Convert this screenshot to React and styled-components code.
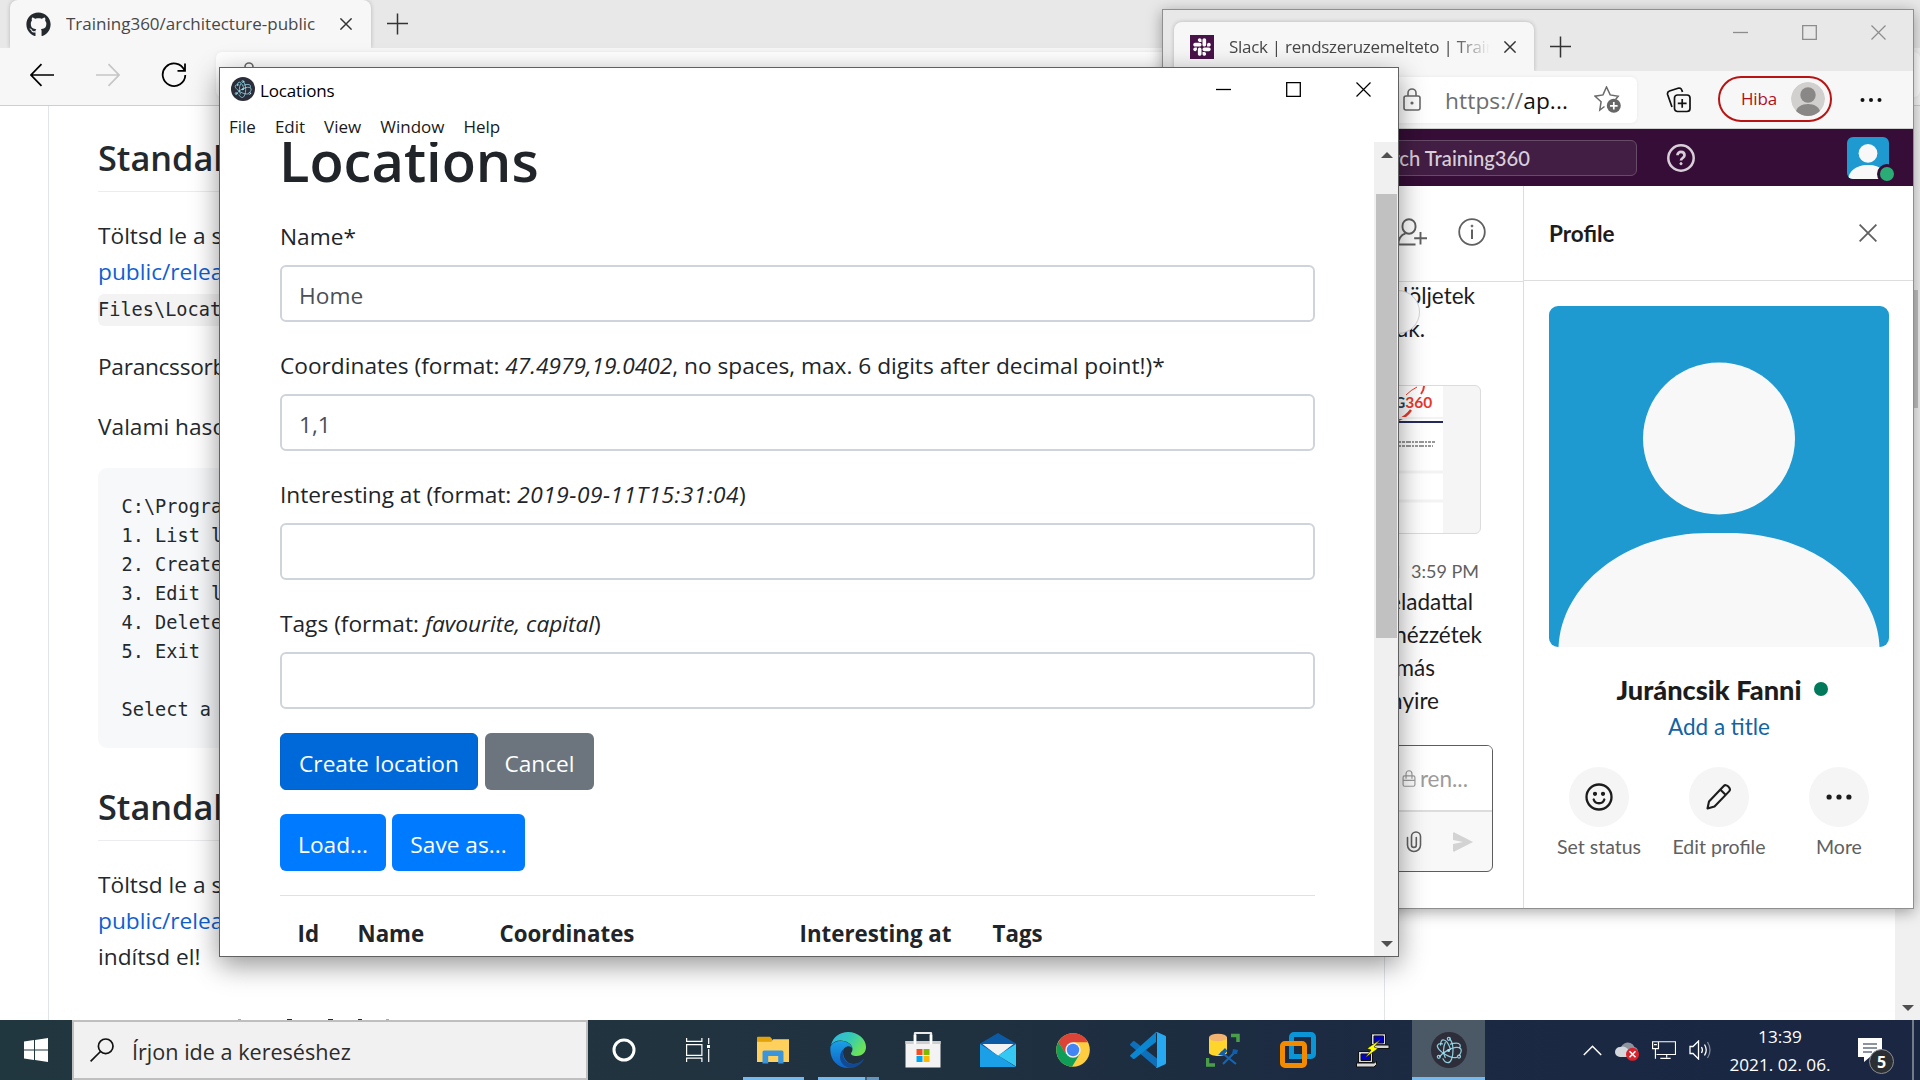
import React from "react";
import styled, { createGlobalStyle, css } from "styled-components";
import { FaGithub, FaSlack } from "react-icons/fa";

const ui = `"Open Sans", "Noto Sans", sans-serif`;
const lato = `Lato, "Noto Sans", sans-serif`;
const mono = `"DejaVu Sans Mono", monospace`;

const Global = createGlobalStyle`
  * { box-sizing: border-box; }
  body { margin: 0; overflow: hidden; font-family: ${ui}; }
  svg { display: block; flex: none; }
  h1, h2, p, pre { margin: 0; }
`;

const Desktop = styled.div`
  position: relative;
  width: 1920px;
  height: 1080px;
  display: grid;
  grid-template-rows: 1020px 60px;
  overflow: hidden;
  background: #fff;
`;

const Row = styled.div`
  display: flex;
  align-items: center;
  gap: ${(p) => p.$gap || 0}px;
`;
const Spacer = styled.span`
  flex: none;
  width: ${(p) => p.$w}px;
`;

/* ---------- browser chrome ---------- */
const Browser = styled.section`
  display: grid;
  grid-template-rows: 48px 58px 1fr;
  min-height: 0;
  background: #fff;
`;
const TabStrip = styled.header`
  display: flex;
  align-items: flex-end;
  background: #e8e8e8;
  padding-left: ${(p) => p.$left}px;
`;
const Tab = styled.div`
  display: flex;
  align-items: center;
  width: ${(p) => p.$w}px;
  height: ${(p) => p.$h}px;
  padding: 0 ${(p) => p.$pr}px 0 16px;
  background: #f7f7f7;
  border-radius: 8px 8px 0 0;
  box-shadow: 0 0 4px rgba(0, 0, 0, 0.22);
  clip-path: inset(-5px -5px 0 -5px);
`;
const TabTitle = styled.span`
  flex: 1;
  margin-left: ${(p) => p.$ml}px;
  font-size: 17px;
  letter-spacing: ${(p) => p.$ls || 0}px;
  line-height: 24px;
  color: #474747;
  white-space: nowrap;
  overflow: hidden;
  ${(p) => p.$fade && css`
    margin-right: 14px;
    mask-image: linear-gradient(90deg, #000 86%, transparent 100%);
  `}
`;
const NewTab = styled.div`
  display: flex;
  align-items: center;
  height: ${(p) => p.$h}px;
  padding-left: 16px;
`;
const ToolBar = styled.div`
  display: flex;
  align-items: center;
  background: #f7f7f7;
  border-bottom: 1px solid #cfcfcf;
`;
const NavButtons = styled.div`
  display: flex;
  align-items: center;
  gap: 41.5px;
  width: 216px;
  padding: 0 0 4px 30px;
`;
const AddressField = styled.div`
  flex: 1;
  height: 45px;
  margin-bottom: 4px;
  padding: 10px 24px;
  border-radius: 6px;
  background: #fff;
  box-shadow: 0 0 4px rgba(0, 0, 0, 0.06);
`;

/* ---------- GitHub page ---------- */
const PageRow = styled.div`
  display: grid;
  grid-template-columns: 48px 1337px 1fr 25px;
  min-height: 0;
`;
const Readme = styled.article`
  overflow: hidden;
  border: 1px solid #e1e4e8;
  border-width: 0 1px;
  padding: 28px 48px 0 49px;
  color: #24292e;
`;
const ReadmeTitle = styled.h2`
  height: 58px;
  padding-top: 1px;
  border-bottom: 1px solid #eaecef;
  font-size: 34.3px;
  font-weight: 600;
  line-height: 45px;
  margin-bottom: 25px;
`;
const Para = styled.p`
  font-size: 22.7px;
  letter-spacing: ${(p) => p.$ls || 0}px;
  line-height: 36px;
  padding-top: 1px;
  margin-bottom: ${(p) => p.$mb ?? 23}px;
  white-space: nowrap;
`;
const Link = styled.span`
  color: #0f5fd0;
`;
const InlineCode = styled.code`
  display: inline-block;
  height: 32px;
  padding-right: 8px;
  background: #f3f3f3;
  border-radius: 6px;
  font: 18.6px/32px ${mono};
`;
const CodeBlock = styled.pre`
  height: 280px;
  margin-bottom: 35px;
  padding: 24px 23.5px;
  border-radius: 9px;
  background: #f6f8fa;
  font: 18.6px/29px ${mono};
`;
const HiddenHeading = styled.div`
  display: flex;
  padding: 44px 0 0 140px;
`;
const Ascender = styled.i`
  width: ${(p) => p.$w}px;
  height: 1px;
  margin-right: ${(p) => p.$mr}px;
  background: ${(p) => (p.$soft ? "#a9a9a9" : "#24292e")};
`;
const PageScroll = styled.div`
  grid-column: 4;
  display: flex;
  flex-direction: column;
  justify-content: space-between;
  align-items: center;
  padding: 184px 2px 9px;
  background: #f0f0f0;
`;
const Thumb = styled.div`
  width: 21px;
  height: ${(p) => p.$h}px;
  background: #c1c1c1;
`;

/* ---------- floating windows ---------- */
const FloatWindow = styled.section`
  position: absolute;
  left: ${(p) => p.$x}px;
  top: ${(p) => p.$y}px;
  width: ${(p) => p.$w}px;
  height: ${(p) => p.$h}px;
  display: grid;
  grid-template-columns: 100%;
  background: #fff;
  overflow: hidden;
`;
const SlackWindow = styled(FloatWindow)`
  grid-template-rows: 61px 58px 57px 1fr;
  border: 1px solid #8f8f8f;
  box-shadow: 0 3px 14px rgba(0, 0, 0, 0.35);
`;
const LocationsWindow = styled(FloatWindow)`
  grid-template-rows: 44px 30px 1fr;
  border: 1px solid #616161;
  box-shadow: 0 8px 26px rgba(0, 0, 0, 0.42);
`;

const StripControls = styled.div`
  display: flex;
  gap: 54px;
  margin-left: auto;
  padding: 0 27px 31px 0;
`;
const SlackToolbar = styled(ToolBar)`
  padding-left: 214px;
`;
const SlackAddress = styled.div`
  display: flex;
  align-items: center;
  width: 260px;
  height: 46px;
  padding: 0 16px 0 26px;
  border-radius: 6px;
  background: #fff;
  box-shadow: 0 0 4px rgba(0, 0, 0, 0.06);
`;
const Url = styled.span`
  flex: 1;
  margin-left: 24px;
  padding-top: 2px;
  font-size: 22.7px;
  letter-spacing: 0.1px;
  color: #6e6e6e;
  white-space: nowrap;
  b { font-weight: 400; color: #111; }
`;
const ProfilePill = styled.div`
  display: flex;
  align-items: center;
  justify-content: space-between;
  width: 114px;
  height: 46px;
  margin: 0 28px 2px 26px;
  padding: 0 5px 0 21px;
  border: 2px solid #b81414;
  border-radius: 23px;
  color: #b10e1c;
  font-size: 17px;
  letter-spacing: -0.2px;
`;

const SlackTop = styled.div`
  display: flex;
  align-items: center;
  background: #350d36;
`;
const SlackSearch = styled.div`
  width: 474px;
  height: 36px;
  padding-right: 106px;
  border: 1px solid #684a69;
  border-radius: 6px;
  background: #431e44;
  color: #d9cfd9;
  font: 500 20.2px/34px ${lato};
  text-align: right;
`;
const TopAvatar = styled.div`
  position: relative;
  margin: 1px 0 0 152px;
`;
const Presence = styled.span`
  position: absolute;
  right: -8px;
  bottom: -5px;
  width: 20px;
  height: 20px;
  border: 3px solid #350d36;
  border-radius: 50%;
  background: #2bac76;
`;
const SlackBody = styled.div`
  display: grid;
  grid-template-columns: 361px 1fr;
  min-height: 0;
  font-family: ${lato};
`;
const Channel = styled.div`
  display: flex;
  flex-direction: column;
  min-width: 0;
  border-right: 1px solid #dddddd;
`;
const ChannelHead = styled.div`
  display: flex;
  align-items: center;
  justify-content: flex-end;
  gap: 31px;
  height: 96px;
  padding: 0 37px 3px 0;
  border-bottom: 1px solid #dddddd;
`;
const MsgLine = styled.div`
  height: 33px;
  padding-right: ${(p) => p.$end}px;
  text-align: right;
  font-size: 22.5px;
  line-height: 33px;
  color: #1d1c1d;
  white-space: nowrap;
`;
const Quoted = styled.div`
  position: relative;
  margin-top: -3px;
`;
const RoundButton = styled.span`
  position: absolute;
  left: 213px;
  top: 11px;
  width: 44px;
  height: 44px;
  border: 1px solid #d5d5d5;
  border-radius: 50%;
  background: #fff;
`;
const FileCard = styled.div`
  align-self: flex-end;
  width: 180px;
  height: 149px;
  margin: 40px 42px 23px 0;
  padding-left: 1px;
  border: 1.5px solid #dcdcdc;
  border-radius: 6px;
  background: #f5f5f5;
  overflow: hidden;
`;
const Stamp = styled(MsgLine)`
  height: 28px;
  line-height: 25px;
  font-size: 18px;
  color: #616061;
  b { margin-right: 11px; font-size: 22.5px; font-weight: 900; color: #1d2a63; }
`;
const Composer = styled.div`
  align-self: flex-end;
  display: grid;
  grid-template-rows: 66px 1fr;
  width: 180px;
  height: 127px;
  margin: 28px 30px 0 0;
  border: 1px solid #5e5d5e;
  border-radius: 6px;
  background: #f8f8f8;
  overflow: hidden;
`;
const ComposerInput = styled.div`
  display: flex;
  align-items: center;
  justify-content: flex-end;
  gap: 4px;
  padding-right: 24px;
  border-bottom: 2px solid #dddddd;
  background: #fff;
  color: #9c9c9c;
  font-size: 22.5px;
`;
const ComposerTools = styled.div`
  display: flex;
  align-items: center;
  justify-content: flex-end;
  gap: 31px;
  padding-right: 19px;
`;

const Profile = styled.aside`
  display: flex;
  flex-direction: column;
`;
const ProfileHead = styled.div`
  display: flex;
  align-items: center;
  justify-content: space-between;
  height: 95px;
  padding: 0 36px 0 25px;
  border-bottom: 1px solid #dddddd;
  color: #1d1c1d;
  font-size: 22.5px;
  font-weight: 700;
`;
const ProfileContent = styled.div`
  display: flex;
  flex-direction: column;
  align-items: center;
  padding: 25px 24px 0 25px;
`;
const PersonName = styled.div`
  display: flex;
  align-items: center;
  gap: 12px;
  height: 40px;
  margin: 22px 0 1px 6px;
  font-size: 27.2px;
  font-weight: 900;
  color: #1d1c1d;
`;
const OnlineDot = styled.span`
  width: 14px;
  height: 14px;
  border-radius: 50%;
  background: #007a5a;
`;
const AddTitle = styled.div`
  height: 33px;
  line-height: 33px;
  font-size: 22.5px;
  color: #1264a3;
`;
const Actions = styled.div`
  display: grid;
  grid-template-columns: repeat(3, 120px);
  margin: 24px -10px 0;
`;
const Action = styled.div`
  display: flex;
  flex-direction: column;
  align-items: center;
  gap: 7px;
  font-size: 19.5px;
  line-height: 26px;
  color: #616061;
`;
const ActionDisc = styled.span`
  display: grid;
  place-items: center;
  width: 60px;
  height: 60px;
  border-radius: 50%;
  background: #f5f5f5;
`;

/* ---------- Locations app ---------- */
const TitleBar = styled.header`
  display: flex;
  align-items: center;
  padding: 0 27px 2px 11px;
  color: #000;
`;
const WindowTitle = styled.span`
  flex: 1;
  margin-left: 5px;
  padding-top: 2px;
  font-size: 17px;
  letter-spacing: -0.15px;
`;
const MenuBar = styled.nav`
  display: flex;
  gap: 19px;
  padding-left: 9px;
  font-size: 17px;
  line-height: 29px;
  color: #1a1a1a;
`;
const AppBody = styled.div`
  display: grid;
  grid-template-columns: 1fr 24px;
  min-height: 0;
`;
const Content = styled.main`
  overflow: hidden;
  min-height: 0;
  padding: 0 59px 0 60px;
  color: #212529;
`;
const Title = styled.h1`
  margin: -19px 0 21px -1px;
  font-size: 56px;
  font-weight: 600;
  line-height: 74px;
  height: 73px;
`;
const Field = styled.label`
  display: block;
  height: 129px;
  font-size: 22.7px;
  line-height: 40px;
`;
const Example = styled.em`
  letter-spacing: ${(p) => p.$ls || 0}px;
`;
const Input = styled.input`
  display: block;
  width: 100%;
  height: 57px;
  margin-top: 8px;
  padding: 4px 17px 0;
  border: 2px solid #ced4da;
  border-radius: 6px;
  background: #fff;
  color: #495057;
  font: 22.7px/36px ${ui};
`;
const ButtonRow = styled.div`
  display: flex;
  gap: ${(p) => p.$gap}px;
  margin-bottom: 24px;
`;
const Button = styled.button`
  width: ${(p) => p.$w}px;
  height: 57px;
  padding: 5px 0 0;
  border: ${(p) => (p.$tone === "active" ? "1.5px solid #0062cc" : "0")};
  border-radius: 6px;
  background: ${(p) => ({ active: "#0069d9", muted: "#6c757d", main: "#007bff" }[p.$tone])};
  color: #fff;
  font: 22.7px/36px ${ui};
  white-space: nowrap;
`;
const TableHead = styled.div`
  display: grid;
  grid-template-columns: 60px 142px 300px 193px 1fr;
  padding: 19px 0 0 17.5px;
  border-top: 1px solid #dee2e6;
  font-size: 22.3px;
  font-weight: 700;
  line-height: 38px;
`;
const AppScroll = styled.div`
  display: flex;
  flex-direction: column;
  align-items: center;
  padding: 10px 0 9px 1px;
  background: #f0f0f0;
`;
const ScrollGap = styled.div`
  flex: ${(p) => (p.$h ? "none" : 1)};
  height: ${(p) => p.$h || 0}px;
`;

/* ---------- taskbar ---------- */
const TaskBar = styled.footer`
  display: flex;
  background: linear-gradient(90deg, #21373f 0%, #20323f 45%, #1b2942 75%, #1a2642 100%);
`;
const StartButton = styled.div`
  display: grid;
  place-items: center;
  width: 72px;
`;
const SearchBox = styled.div`
  display: flex;
  align-items: center;
  gap: 18px;
  width: 516px;
  padding-left: 16px;
  border: 2px solid #bfbfbf;
  background: #f1f1f1;
`;
const SearchHint = styled.span`
  padding-top: 2px;
  color: #2b2b2b;
  font-size: 21.6px;
`;
const TaskItem = styled.div`
  display: grid;
  place-items: center;
  width: ${(p) => p.$w || 75}px;
  position: relative;
  background: ${(p) => (p.$active ? "#4b5866" : "transparent")};
`;
const Underline = styled.span`
  position: absolute;
  left: ${(p) => p.$left}px;
  bottom: 0;
  width: ${(p) => p.$w}px;
  height: 3px;
  background: ${(p) => p.$bg || "#76b9ed"};
`;
const Tray = styled.div`
  display: flex;
  align-items: center;
  gap: 13px;
  margin-left: auto;
`;
const Clock = styled.div`
  width: 104px;
  margin-left: 3px;
  text-align: center;
  color: #fff;
  font-size: 17.2px;
  line-height: 28.5px;
  white-space: nowrap;
  padding-top: 2px;
`;
const Notice = styled.div`
  position: relative;
  width: 36px;
  height: 36px;
  margin: 12px 0 0 13px;
`;
const NoticeCount = styled.span`
  position: absolute;
  right: 0;
  bottom: 0;
  display: grid;
  place-items: center;
  width: 25px;
  height: 25px;
  border: 1.5px solid #8b8f94;
  border-radius: 50%;
  background: #2b2f33;
  color: #fff;
  font-size: 16px;
  font-weight: 700;
  line-height: 1;
`;
const ShowDesktop = styled.div`
  width: 8px;
  height: 60px;
  margin-left: 5px;
  border-left: 2px solid #727c87;
`;

/* ---------- drawings ---------- */
const Cross = ({ s = 15, c = "#000", w = 1.2 }) => (
  <svg width={s} height={s} viewBox="0 0 15 15" stroke={c} strokeWidth={w}><path d="M.5.5l14 14M14.5.5l-14 14" /></svg>
);
const Plus = () => (
  <svg width="22" height="22" viewBox="0 0 22 22" stroke="#333" strokeWidth="1.5"><path d="M10.500 0.500v21M0 10.500h21" /></svg>
);
const WinControls = ({ c }) => (
  <>
    <svg width="15" height="15" stroke={c} strokeWidth="1.3"><path d="M0 7.500h15" /></svg>
    <svg width="15" height="15" fill="none" stroke={c} strokeWidth="1.3"><path d="M.7.7h13.600v13.600H.7z" /></svg>
    <Cross c={c} />
  </>
);
const Arrow = ({ flip, c = "#000" }) => (
  <svg width="24" height="24" viewBox="0 0 24 24" fill="none" stroke={c} strokeWidth="1.7">
    <path d={flip ? "M0 12h23M12.5 1.200L23 12l-10.500 10.800" : "M24 12H1M11.500 1.200L1 12l10.500 10.800"} />
  </svg>
);
const Reload = () => (
  <svg width="26" height="26" viewBox="0 0 26 26" fill="none" stroke="#000" strokeWidth="1.8">
    <path d="M23.300 8A11.300 11.300 0 1 0 24.300 13M24 1.500v7.300h-7.500" />
  </svg>
);
const Lock = ({ w = 18, h = 23, c = "#6a6a6a", dot = true }) => (
  <svg width={w} height={h} viewBox="0 0 18 23" fill="none" stroke={c} strokeWidth="1.6">
    <rect x="1" y="8" width="16" height="14" rx="2" />
    <path d={dot ? "M5 8V5a4 4 0 0 1 8 0v3" : "M5 12V5a4 4 0 0 1 8 0v7M1 14h16"} />
    {dot && <circle cx="9" cy="15" r=".8" fill={c} />}
  </svg>
);
const Triangle = ({ up }) => (
  <svg width="12" height="6" viewBox="0 0 12 6" fill="#505050"><path d={up ? "M0 6L6 0l6 6z" : "M0 0h12L6 6z"} /></svg>
);
const Electron = ({ s, bg = "#2b2e3a" }) => (
  <svg width={s} height={s} viewBox="0 0 36 36" fill="none" stroke="#9feaf9" strokeOpacity=".85" strokeWidth="1.25" strokeLinecap="round">
    <circle cx="18" cy="18" r="18" fill={bg} stroke="none" />
    <path d="M11.500 11.800c-2.500-.4-4.300 0-4.900 1.200-1.200 2.200 2.200 6.300 7.700 9.500 4.600 2.600 9 3.600 11.300 2.900" />
    <path d="M9.500 22.800c-2.800-1.700-4-3.500-3.200-4.900 1.300-2.200 6.500-2.700 12-1.500" transform="rotate(60 18 18)" />
    <path d="M12 26.800c1.100 2.400 3 3.900 5 3.900 2.800 0 5-5.400 5-12.200 0-5.300-1.300-9.700-3.300-11.500" />
    <path d="M14.200 25.500c-1.100-2-1.700-4.300-1.700-7 0-3 .7-5.700 1.800-8" />
    <path d="M28.200 23.300c1.900-2.600 2.500-4.900 1.600-6.400-1.500-2.500-7.100-1.900-12.900 1.200-3.900 2.100-6.900 4.600-8.300 6.600" />
    <path d="M19.500 12.200c4.500-1.500 8.400-1.400 9.500.5.500.9.300 2-.4 3.200" />
    <circle cx="17.800" cy="6.800" r="1.500" /><circle cx="7.800" cy="24.800" r="1.500" /><circle cx="28" cy="24.600" r="1.500" />
    <circle cx="17.600" cy="18.400" r=".9" fill="#9feaf9" />
  </svg>
);
const FavAdd = () => (
  <svg width="27" height="27" viewBox="0 0 27 27" fill="none" stroke="#6a6a6a" strokeWidth="1.500">
    <path d="M10.500 20.500L5.800 24l1.300-8.300L1 10.200l8-1.300L12.500 1l3.700 7.900 8 1.300-2.500 3" />
    <circle cx="19.800" cy="19.800" r="7" fill="#666" stroke="none" />
    <path d="M19.800 16v7.600M16 19.800h7.600" stroke="#fff" strokeWidth="1.700" />
  </svg>
);
const Collections = () => (
  <svg width="26" height="26" viewBox="0 0 26 26" fill="none" stroke="#111" strokeWidth="1.700">
    <rect x="8.500" y="8" width="15.500" height="16.500" rx="3" />
    <path d="M16.200 12v8.800M11.800 16.400h8.800M6 20L1.600 7.500A3 3 0 0 1 3.500 4L12 1.200a3 3 0 0 1 3.800 1.900L16.500 5" />
  </svg>
);
const Dots = ({ w = 22, r = 2, c = "#111" }) => (
  <svg width={w} height="6" viewBox={`0 0 ${w} 6`} fill={c}>
    <circle cx={r + 0.5} cy="3" r={r} /><circle cx={w / 2} cy="3" r={r} /><circle cx={w - r - 0.5} cy="3" r={r} />
  </svg>
);
const GreyPerson = () => (
  <svg width="34" height="34" viewBox="0 0 34 34">
    <clipPath id="gp"><circle cx="17" cy="17" r="17" /></clipPath>
    <g clipPath="url(#gp)"><circle cx="17" cy="17" r="17" fill="#d2d0ce" /><circle cx="17" cy="13" r="7.700" fill="#8a8886" /><path d="M4.500 31c1-6 6-9 12.500-9s11.500 3 12.500 9v3h-25z" fill="#8a8886" /></g>
  </svg>
);
const BlueAvatar = ({ w, h, r }) => (
  <svg width={w} height={h} viewBox="0 0 340 341" preserveAspectRatio="none">
    <clipPath id={`av${w}`}><rect width="340" height="341" rx={r} /></clipPath>
    <g clipPath={`url(#av${w})`}>
      <rect width="340" height="341" fill="#1e9ad1" />
      <circle cx="170" cy="132.500" r="76" fill="#f8f8f8" />
      <path d="M9.500 341C12 280 75 227 160 227h20c85 0 148 53 150.500 114z" fill="#f8f8f8" />
    </g>
  </svg>
);
const Help = () => (
  <svg width="28" height="28" viewBox="0 0 28 28" fill="none" stroke="#d9cfd9" strokeWidth="2.500">
    <circle cx="14" cy="14" r="12.700" /><path d="M10.500 11.300c0-4.600 7-4.500 7 0 0 2.700-3.500 2.700-3.500 5.300" strokeWidth="2.700" /><circle cx="14" cy="19.700" r="1.100" fill="#d9cfd9" strokeWidth="1" />
  </svg>
);
const AddPerson = () => (
  <svg width="30" height="28" viewBox="0 0 30 28" fill="none" stroke="#616061" strokeWidth="1.900">
    <rect x="5.500" y="1.200" width="13" height="14.500" rx="6.500" /><path d="M8.500 15.300C4 17 1.300 20.500 1.300 26.500H18.500M23.500 14v12.500M17.200 20.200H30" />
  </svg>
);
const Info = () => (
  <svg width="28" height="28" viewBox="0 0 28 28" fill="none" stroke="#616061" strokeWidth="1.800">
    <circle cx="14" cy="14" r="12.800" /><path d="M14 11.500v9.500" strokeWidth="2" /><circle cx="14" cy="8" r="1" fill="#616061" strokeWidth=".8" />
  </svg>
);
const Preview = () => (
  <svg width="178" height="147" viewBox="0 0 178 147">
    <rect width="140" height="147" fill="#fff" />
    <g stroke="#e8392b" fill="none"><path d="M103 9Q108 4 114 1" /><path d="M121 0q0 4-3 8" strokeWidth="2" /><path d="M108 24q-5 7-13 10" strokeWidth="2.500" /></g>
    <text x="91" y="21.500" fontFamily="Lato, sans-serif" fontSize="15.500" fontWeight="700" fill="#27425c">G<tspan fill="#e8392b">360</tspan></text>
    <path d="M0 32h140" stroke="#f3f3f3" strokeWidth="2" />
    <path d="M0 36h140" stroke="#252a5c" strokeWidth="2" />
    <path d="M60 56h72M60 60h70" stroke="#777" strokeWidth="1.300" strokeDasharray="3 1 5 1 2 1" />
    <path d="M0 86h140M0 115h140" stroke="#f3f3f3" strokeWidth="3" />
  </svg>
);
const Clip = () => (
  <svg width="16" height="22" viewBox="0 0 16 22" fill="none" stroke="#616061" strokeWidth="1.600" strokeLinecap="round">
    <path d="M1.500 6.500V14a6.500 6.500 0 0 0 13 0V5.500a4.500 4.500 0 0 0-9 0V14a2.300 2.300 0 0 0 4.800 0V6.500" />
  </svg>
);
const Send = () => (
  <svg width="20" height="20" viewBox="0 0 20 20" fill="#d3d3d3"><path d="M0 1.300Q.3 0 1.500.4L20 10 1.500 19.600Q.3 20 0 18.700V12l10-2L0 8z" /></svg>
);
const Smile = () => (
  <svg width="28" height="28" viewBox="0 0 28 28" fill="none" stroke="#1d1c1d" strokeWidth="2.300" strokeLinecap="round">
    <circle cx="14" cy="14" r="12.500" /><path d="M8.700 16.500c1.500 5 9.100 5 10.600 0" /><circle cx="10" cy="10.800" r="1.500" fill="#1d1c1d" strokeWidth="1.200" /><circle cx="18" cy="10.800" r="1.500" fill="#1d1c1d" strokeWidth="1.200" />
  </svg>
);
const Pencil = () => (
  <svg width="26" height="26" viewBox="0 0 26 26" fill="none" stroke="#1d1c1d" strokeWidth="2.100" strokeLinejoin="round">
    <path d="M1.500 24.500l1.500-7L17.500 2.200c1.500-1.600 3.200-1.200 4.800.3s2.300 3.300.8 4.900L8.500 22.500zM14.500 5.800l5.300 5.200" />
  </svg>
);

const Search = () => (
  <svg width="24" height="24" viewBox="0 0 24 24" fill="none" stroke="#111" strokeWidth="1.700"><circle cx="15.700" cy="8.300" r="7.300" /><path d="M10.500 13.500L.6 23.400" /></svg>
);
const WindowsLogo = () => (
  <svg width="24" height="24" viewBox="0 0 24 24" fill="#fff"><path d="M0 3.500L10 2v9.500H0zM11 1.900L24 0v11.500H11zM0 12.500h10V22L0 20.500zM11 12.500h13V24l-13-1.900z" /></svg>
);
const TaskView = () => (
  <svg width="24" height="24" viewBox="0 0 24 24" fill="none" stroke="#fff" strokeWidth="1.200">
    <path d="M.6 0v3.400h15.300V0M.6 6.600h15.300v10.800H.6zM.6 24v-3.900h15.300V24M22.700 0v6M22.700 11v13" /><rect x="21" y="7" width="3.500" height="3" fill="#fff" stroke="none" />
  </svg>
);
const Folder = () => (
  <svg width="32" height="28" viewBox="0 0 32 28">
    <path d="M0 1.500Q0 .8.800.8H13l2 2v3H0z" fill="#e2a20c" /><path d="M0 5.500h14.500l1.500-2.300h16V26H0z" fill="#ffd15c" />
    <path d="M5.500 27.500V16a1.500 1.500 0 0 1 1.500-1.500h18a1.500 1.500 0 0 1 1.500 1.500v11.500h-5.300V20h-10v7.500z" fill="#3a95dd" />
  </svg>
);
const Edge = () => (
  <svg width="36" height="36" viewBox="0 0 36 36">
    <defs>
      <linearGradient id="eg1" x1="0" y1="0" x2="1" y2=".5"><stop offset="0" stopColor="#2fb6ea" /><stop offset=".55" stopColor="#35c9b6" /><stop offset="1" stopColor="#6ce357" /></linearGradient>
      <linearGradient id="eg2" x1="0" y1="0" x2="0" y2="1"><stop offset="0" stopColor="#1aa0e6" /><stop offset="1" stopColor="#0e62c4" /></linearGradient>
    </defs>
    <path d="M1 13C3 5 10 0 18 0c10 0 18 7 18 15 0 6-4.500 9-9.500 9-4 0-5.500-1.500-5.500-2.500 0-1 1.500-1.700 1.500-4.500C22.500 12 16 8.500 10.500 8.500 6 8.500 3 10.500 1 13z" fill="url(#eg1)" />
    <path d="M.5 14.500C3 10 8 8.500 12 9c6 .6 10 4 10.500 7.500-1-2.500-5-3.500-8-.5-2.500 2.500-2 10 3 14 4.500 3.500 11 1.500 14-.5-3 4-8 6.500-13.500 6.500C7 36-1 27 .5 14.500z" fill="url(#eg2)" />
    <path d="M14 17c-2 3-1.500 9 3 13 5 4.200 12 1.500 16.500-3 .6 0 .5.500.2 1C30 33.500 25 36 20 36c-6-1-10-6-10-11 0-4 2-7 4-8z" fill="#114a93" />
  </svg>
);
const Store = () => (
  <svg width="36" height="36" viewBox="0 0 36 36">
    <path d="M10 11V2q0-1.200 1.200-1.200h13.600Q26 .8 26 2v9" fill="none" stroke="#e9e9e9" strokeWidth="2.500" /><path d="M.5 9h35v26.500h-35z" fill="#f3f3f3" /><path d="M.5 9h35v3H.5z" fill="#cfcfcf" />
    <path d="M10 3v9M26 3v9" stroke="#fff" strokeWidth="2.500" />
    <path d="M11.500 17h6v6h-6z" fill="#f25022" /><path d="M18.500 17h6v6h-6z" fill="#7fba00" /><path d="M11.500 24h6v6h-6z" fill="#00a4ef" /><path d="M18.500 24h6v6h-6z" fill="#ffb900" />
  </svg>
);
const Mail = () => (
  <svg width="36" height="34" viewBox="0 0 36 34">
    <path d="M0 10.500L18 0l18 10.500V20H0z" fill="#0c59a4" /><path d="M2.500 11h31L18 23z" fill="#f2f2f2" /><path d="M0 11l18 11.500L36 34H0z" fill="#1ba0e8" /><path d="M36 11L18 22.500 36 33.500z" fill="#34c8f2" />
  </svg>
);
const Chrome = () => (
  <svg width="34" height="34" viewBox="0 0 34 34">
    <circle cx="17" cy="17" r="16.800" fill="#ffcd40" />
    <path d="M2.300 9A16.800 16.800 0 0 1 31.900 9.200H17L9.800 21z" fill="#db4437" />
    <path d="M2.300 9A16.800 16.800 0 0 0 16 33.800L23.800 21H10z" fill="#0f9d58" />
    <circle cx="17" cy="17" r="7.700" fill="#f1f1f1" /><circle cx="17" cy="17" r="6.200" fill="#4285f4" />
  </svg>
);
const VsCode = () => (
  <svg width="36" height="36" viewBox="0 0 36 36">
    <path d="M.5 13.500q-1-.9 0-1.800L3 9.300q.8-.5 1.600 0L27 26.500V36z" fill="#0f6fb8" /><path d="M26 0v10L4.600 26.700q-.8.600-1.600 0L.5 24.500q-1-.8 0-1.600z" fill="#0b86d1" /><path d="M26 0q.5-.2 1 0l8.300 3.800q.7.400.7 1.200v26q0 .8-.7 1.200L27 36q-.5.200-1 0l1-1.500V1.500z" fill="#27a9f1" />
  </svg>
);
const DbTools = () => (
  <svg width="34" height="35" viewBox="0 0 34 35">
    <path d="M3 4v16c2 4 16 4 18 0V4z" fill="#ffd52b" /><ellipse cx="12" cy="4.500" rx="9" ry="3.800" fill="#f2b271" />
    <path d="M25 2.500h7V9M1.500 25v7H9" fill="none" stroke="#4a9e4a" strokeWidth="3.500" /><path d="M15 19l15 12M30 18L17 31" stroke="#1565b5" strokeWidth="2.200" /><path d="M12 22l7-7 2.500 3-4 4zM26 21l1-5 5 1-1 4z" fill="#0f5dab" />
  </svg>
);
const VmWare = () => (
  <svg width="36" height="36" viewBox="0 0 36 36" fill="none" strokeWidth="5">
    <rect x="11.500" y="2.500" width="22" height="22" rx="2.500" stroke="#0c95d6" /><rect x="2.500" y="11.500" width="22" height="22" rx="2.500" stroke="#f38b00" /><path d="M11.500 14v10.500H20" stroke="#0c95d6" />
  </svg>
);
const Putty = () => (
  <svg width="34" height="35" viewBox="0 0 34 35" stroke="#111" strokeWidth="1">
    <path d="M15.500.8h14v11h-14z" fill="#d8d8d8" /><path d="M18 3h9.500v7H18z" fill="#00c" />
    <path d="M14.500 12H33v3.500H14.500z" fill="#d5d5d5" />
    <path d="M2.500 18.500h14v11h-14z" fill="#d8d8d8" /><path d="M5 21h9.500v6.500H5z" fill="#00c" /><path d="M.5 30h18l2-2v3.500L18 34H.5z" fill="#d8d8d8" />
    <path d="M25 6L11 15.500l4 1.500L9 25l13-9.500-4-1.500z" fill="#ff0" strokeWidth=".6" />
  </svg>
);
const Chevron = () => (
  <svg width="19" height="11" fill="none" stroke="#fff" strokeWidth="1.500"><path d="M.8 10L9.500 1.200 18.200 10" /></svg>
);
const Cloud = () => (
  <svg width="24" height="21" viewBox="0 0 24 21">
    <path d="M6 13A7 7 0 0 1 19.500 7c2.500.5 3.500 2.500 3.500 5z" fill="#8d949e" /><path d="M5 17a5 5 0 0 1 0-10c5-2 9 1 12 10z" fill="#d4d8dc" />
    <circle cx="17.500" cy="14.300" r="6.500" fill="#d9232e" /><path d="M14.500 11.300l6 6M20.500 11.300l-6 6" stroke="#fff" strokeWidth="1.600" />
  </svg>
);
const Network = () => (
  <svg width="24" height="20" viewBox="0 0 24.500 20" fill="none" stroke="#fff" strokeWidth="1.200">
    <path d="M7 1.600h17v13H4.600M.6 1.600h6v7h-6zM3.500 8.600V19M2 4.500h3M15 14.600v3M8.500 18.500H19" />
  </svg>
);
const Speaker = () => (
  <svg width="23" height="20" viewBox="0 0 23 20" fill="none" stroke="#fff" strokeWidth="1.300">
    <path d="M1 6.500h3L9.500 1v18L4 13.500H1z" /><path d="M12.500 7q1.800 3 0 6M15.500 4.500q3.500 5.500 0 11" /><path d="M18.500 2q5 8 0 16" stroke="#7d8795" />
  </svg>
);
const Bubble = () => (
  <svg width="24" height="24" viewBox="0 0 24 24"><path d="M0 0h24v19H12l-6 5v-5H0z" fill="#fff" /><path d="M5 6h14M5 10h14M5 14h9" stroke="#1b2942" strokeWidth="1.200" /></svg>
);

const fields = [
  { label: "Name*", value: "Home" },
  { label: <>Coordinates (format: <Example>47.4979,19.0402</Example>, no spaces, max. 6 digits after decimal point!)*</>, value: "1,1" },
  { label: <>Interesting at (format: <Example $ls={0.52}>2019-09-11T15:31:04</Example>)</>, value: "" },
  { label: <>Tags (format: <Example>favourite, capital</Example>)</>, value: "" },
];

function GithubBrowser() {
  return (
    <Browser>
      <TabStrip $left={10}>
        <Tab $w={361} $h={48} $pr={19}>
          <FaGithub size={25} color="#24292e" />
          <TabTitle $ml={15}>Training360/architecture-public</TabTitle>
          <Cross s={12} c="#333" w={1.8} />
        </Tab>
        <NewTab $h={48}><Plus /></NewTab>
      </TabStrip>
      <ToolBar>
        <NavButtons><Arrow /><Arrow flip c="#c6c6c6" /><Reload /></NavButtons>
        <AddressField><Lock /></AddressField>
      </ToolBar>
      <PageRow>
        <span />
        <Readme>
          <ReadmeTitle>Standalone</ReadmeTitle>
          <Para $mb={22}>
            Töltsd le a standalone<br /><Link>public/releases</Link><br /><InlineCode>Files\Locations</InlineCode>
          </Para>
          <Para $ls={-0.3}>Parancssorból</Para>
          <Para>Valami hasonló</Para>
          <CodeBlock>{"C:\\Program\n1. List lo\n2. Create\n3. Edit lo\n4. Delete\n5. Exit\n\nSelect a"}</CodeBlock>
          <ReadmeTitle>Standalone</ReadmeTitle>
          <Para $mb={0}>Töltsd le a standalone<br /><Link>public/releases</Link><br />indítsd el!</Para>
          <HiddenHeading>
            <Ascender $w={3} $mr={46} $soft /><Ascender $w={5} $mr={36} /><Ascender $w={5} $mr={25} /><Ascender $w={4} $mr={24} /><Ascender $w={3} $mr={0} $soft />
          </HiddenHeading>
        </Readme>
        <PageScroll><Thumb $h={118} /><Triangle /></PageScroll>
      </PageRow>
    </Browser>
  );
}

function Slack() {
  return (
    <SlackWindow $x={1162} $y={9} $w={752} $h={900}>
      <TabStrip $left={11}>
        <Tab $w={360} $h={49} $pr={18}>
          <svg width="24" height="24"><rect width="24" height="24" fill="#481349" /><FaSlack x="2" y="2" size={20} color="#fff" /></svg>
          <TabTitle $ml={15} $ls={-0.28} $fade>Slack | rendszeruzemelteto | Training</TabTitle>
          <Cross s={12} c="#333" w={1.8} />
        </Tab>
        <NewTab $h={49}><Plus /></NewTab>
        <StripControls><WinControls c="#8c8c8c" /></StripControls>
      </TabStrip>
      <SlackToolbar>
        <SlackAddress>
          <Lock />
          <Url>https://<b>ap...</b></Url>
          <FavAdd />
        </SlackAddress>
        <Spacer $w={29} />
        <Collections />
        <ProfilePill>Hiba<GreyPerson /></ProfilePill>
        <Dots />
      </SlackToolbar>
      <SlackTop>
        <SlackSearch>Search Training360</SlackSearch>
        <Spacer $w={30} />
        <Help />
        <TopAvatar><BlueAvatar w={42} h={42} r={48} /><Presence /></TopAvatar>
      </SlackTop>
      <SlackBody>
        <Channel>
          <ChannelHead><AddPerson /><Info /></ChannelHead>
          <Quoted>
            <MsgLine $end={48}>kijelöljetek</MsgLine>
            <MsgLine $end={98}>tudjuk.</MsgLine>
            <RoundButton />
          </Quoted>
          <FileCard><Preview /></FileCard>
          <Stamp $end={44}><b>u</b>3:59 PM</Stamp>
          <MsgLine $end={50}>feladattal</MsgLine>
          <MsgLine $end={41}>nézzétek</MsgLine>
          <MsgLine $end={88}>más</MsgLine>
          <MsgLine $end={84}>mennyire</MsgLine>
          <Composer>
            <ComposerInput><Lock w={14} h={17} c="#9c9c9c" dot={false} />ren...</ComposerInput>
            <ComposerTools><Clip /><Send /></ComposerTools>
          </Composer>
        </Channel>
        <Profile>
          <ProfileHead>Profile<Cross s={18} c="#616061" w={1.5} /></ProfileHead>
          <ProfileContent>
            <BlueAvatar w={340} h={341} r={9} />
            <PersonName>Juráncsik Fanni<OnlineDot /></PersonName>
            <AddTitle>Add a title</AddTitle>
            <Actions>
              <Action><ActionDisc><Smile /></ActionDisc>Set status</Action>
              <Action><ActionDisc><Pencil /></ActionDisc>Edit profile</Action>
              <Action><ActionDisc><Dots w={26} r={2.6} c="#1d1c1d" /></ActionDisc>More</Action>
            </Actions>
          </ProfileContent>
        </Profile>
      </SlackBody>
    </SlackWindow>
  );
}

function Locations() {
  return (
    <LocationsWindow $x={219} $y={67} $w={1180} $h={890}>
      <TitleBar>
        <Electron s={24} />
        <WindowTitle>Locations</WindowTitle>
        <Row $gap={55}><WinControls c="#000" /></Row>
      </TitleBar>
      <MenuBar>{["File", "Edit", "View", "Window", "Help"].map((m) => <span key={m}>{m}</span>)}</MenuBar>
      <AppBody>
        <Content>
          <Title>Locations</Title>
          {fields.map((f, i) => (
            <Field key={i}>{f.label}<Input readOnly value={f.value} /></Field>
          ))}
          <ButtonRow $gap={7}>
            <Button $w={198} $tone="active">Create location</Button>
            <Button $w={109} $tone="muted">Cancel</Button>
          </ButtonRow>
          <ButtonRow $gap={6}>
            <Button $w={106} $tone="main">Load...</Button>
            <Button $w={133} $tone="main">Save as...</Button>
          </ButtonRow>
          <TableHead>{["Id", "Name", "Coordinates", "Interesting at", "Tags"].map((t) => <span key={t}>{t}</span>)}</TableHead>
        </Content>
        <AppScroll>
          <Triangle up />
          <ScrollGap $h={36} />
          <Thumb $h={444} />
          <ScrollGap />
          <Triangle />
        </AppScroll>
      </AppBody>
    </LocationsWindow>
  );
}

function Taskbar() {
  return (
    <TaskBar>
      <StartButton><WindowsLogo /></StartButton>
      <SearchBox><Search /><SearchHint>Írjon ide a kereséshez</SearchHint></SearchBox>
      <TaskItem $w={72}>
        <svg width="24" height="24" fill="none" stroke="#fff" strokeWidth="3"><circle cx="12" cy="12" r="10" /></svg>
      </TaskItem>
      <TaskItem><TaskView /></TaskItem>
      <TaskItem><Folder /><Underline $left={8} $w={61} /></TaskItem>
      <TaskItem><Edge /><Underline $left={8} $w={47} /><Underline $left={55} $w={2} $bg="#3f5f78" /><Underline $left={57} $w={12} $bg="#6595bd" /></TaskItem>
      <TaskItem><Store /></TaskItem>
      <TaskItem><Mail /></TaskItem>
      <TaskItem><Chrome /></TaskItem>
      <TaskItem><VsCode /></TaskItem>
      <TaskItem><DbTools /></TaskItem>
      <TaskItem><VmWare /></TaskItem>
      <TaskItem><Putty /></TaskItem>
      <Spacer $w={2} />
      <TaskItem $w={73} $active><Electron s={36} bg="#2e2d3a" /><Underline $left={0} $w={73} /></TaskItem>
      <Tray>
        <Chevron /><Cloud /><Network /><Speaker />
        <Clock>13:39<br />2021. 02. 06.</Clock>
        <Notice><Bubble /><NoticeCount>5</NoticeCount></Notice>
        <ShowDesktop />
      </Tray>
    </TaskBar>
  );
}

export default function App() {
  return (
    <>
      <Global />
      <Desktop>
        <GithubBrowser />
        <Taskbar />
        <Slack />
        <Locations />
      </Desktop>
    </>
  );
}
